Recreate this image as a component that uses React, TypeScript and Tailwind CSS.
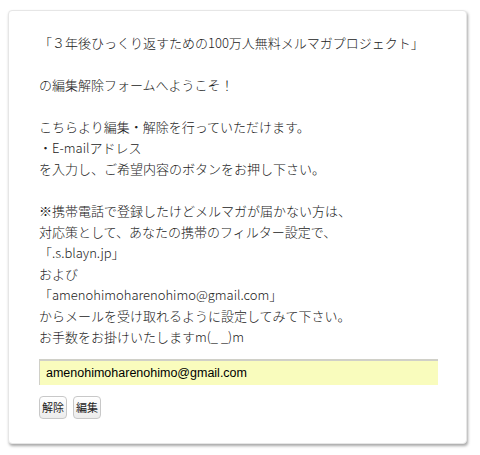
import { useState } from "react";

const lines = [
  "「３年後ひっくり返すための100万人無料メルマガプロジェクト」",
  "",
  "の編集解除フォームへようこそ！",
  "",
  "こちらより編集・解除を行っていただけます。",
  "・E-mailアドレス",
  "を入力し、ご希望内容のボタンをお押し下さい。",
  "",
  "※携帯電話で登録したけどメルマガが届かない方は、",
  "対応策として、あなたの携帯のフィルター設定で、",
  "「.s.blayn.jp」",
  "および",
  "「amenohimoharenohimo@gmail.com」",
  "からメールを受け取れるように設定してみて下さい。",
  "お手数をお掛けいたしますm(_ _)m",
];

export default function App() {
  const [email, setEmail] = useState("amenohimoharenohimo@gmail.com");

  return (
    <div
      className="w-[480px] h-[455px] bg-white pt-[10px] pl-[8px]"
      style={{ fontFamily: '"Noto Sans CJK JP", "Noto Sans", sans-serif' }}
    >
      <div className="w-[459px] h-[434px] rounded-[4px] border border-[#e6e6e6] bg-white shadow-[1px_2px_3px_rgba(0,0,0,0.35)] pt-[21px] pl-[30px] pr-[29px]">
        {/* message */}
        <div className="text-[13px] leading-[21px] font-light text-[#222]">
          {lines.map((l, i) => (
            <p key={i} className="h-[21px] whitespace-nowrap">
              {l}
            </p>
          ))}
        </div>

        {/* form */}
        <form className="mt-[12px]" onSubmit={(e) => e.preventDefault()}>
          <input
            type="text"
            value={email}
            onChange={(e) => setEmail(e.target.value)}
            className="block w-[399px] h-[26px] bg-[#f9fcbd] border-t-2 border-l border-[#d0d0c8] pl-[6px] text-[12.5px] text-black outline-none"
            style={{ fontFamily: '"Liberation Sans", Arial, sans-serif' }}
          />
          <div className="mt-[11px] flex gap-[6px]">
            <button className="h-[23px] px-[2px] rounded-[4px] border border-[#c8c8c8] bg-gradient-to-b from-white to-[#ececec] text-[11px] text-[#222]">
              解除
            </button>
            <button className="h-[23px] px-[2px] rounded-[4px] border border-[#c8c8c8] bg-gradient-to-b from-white to-[#ececec] text-[11px] text-[#222]">
              編集
            </button>
          </div>
        </form>
      </div>
    </div>
  );
}
